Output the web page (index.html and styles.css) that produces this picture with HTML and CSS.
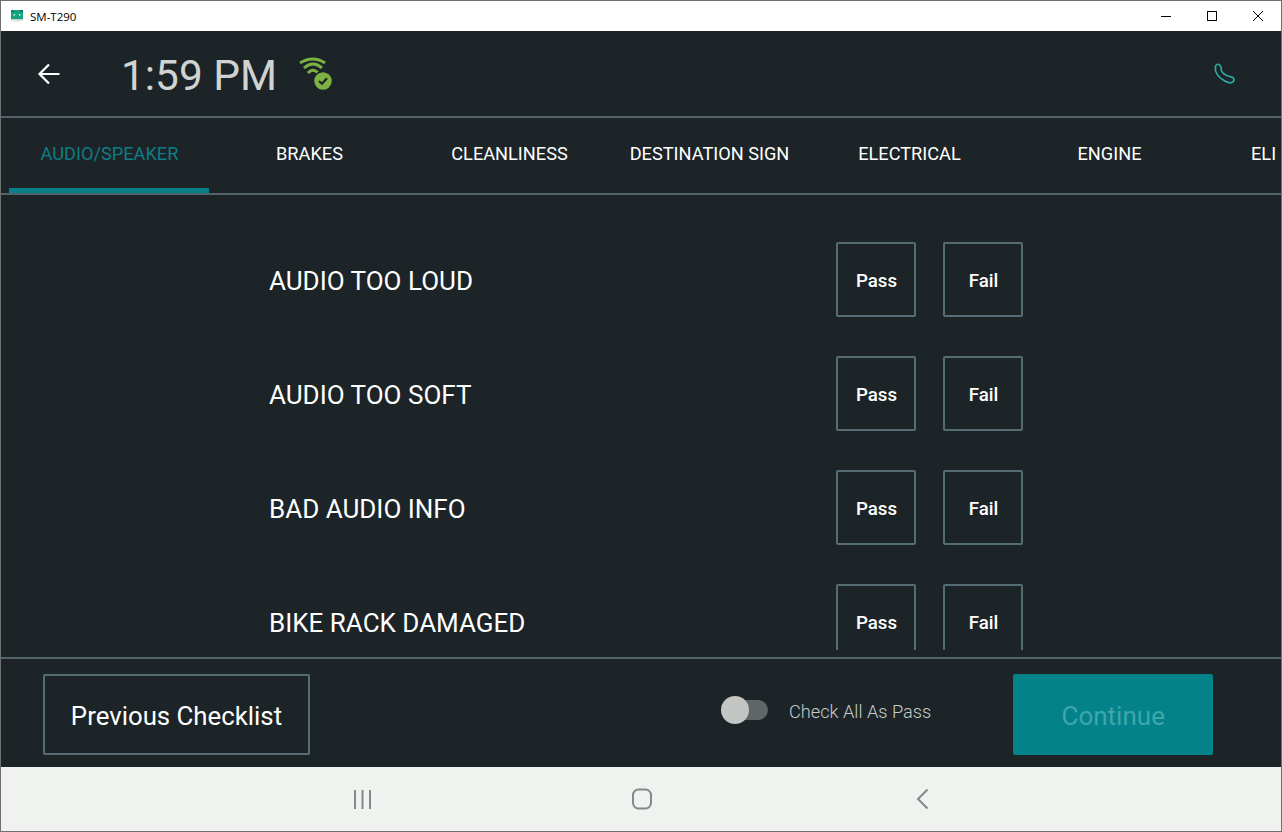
FILE: index.html
```html
<!DOCTYPE html>
<html>
<head>
    <meta charset="UTF-8">
    <title>SM-T290</title>
    <link rel="stylesheet" href="styles.css">
</head>
<body>
<div class="window">
    <div class="titlebar">
        <svg class="app-icon" width="14" height="14" viewBox="0 0 14 14">
            <path d="M1 1h12v9H1z" fill="#14a37f"/>
            <path d="M1 1h2.500L4 3H1zM13 1h-2.500L10 3h3z" fill="#0d7c62"/>
            <rect x="3.500" y="5" width="1.600" height="1.600" fill="#c9f2e4"/>
            <rect x="8.900" y="5" width="1.600" height="1.600" fill="#c9f2e4"/>
            <rect x="1" y="10" width="12" height="1.500" fill="#c8cfcd"/>
            <rect x="4" y="11.500" width="6" height="1.500" fill="#e3e6e5"/>
        </svg>
        <span class="title">SM-T290</span>
        <div class="win-controls">
            <svg width="12" height="12" viewBox="0 0 12 12"><path d="M1 6.500h10" stroke="#000" fill="none"/></svg>
            <svg width="12" height="12" viewBox="0 0 12 12"><rect x="1.500" y="1.500" width="9" height="9" stroke="#000" fill="none"/></svg>
            <svg width="12" height="12" viewBox="0 0 12 12"><path d="M1 1l10 10M11 1L1 11" stroke="#000" fill="none"/></svg>
        </div>
    </div>

    <div class="app">
        <header class="header">
            <svg class="back" width="26" height="26" viewBox="0 0 26 26"><path d="M23.500 13H3.500M13 3.500L3.500 13l9.500 9.500" stroke="#fff" stroke-width="2.200" fill="none"/></svg>
            <span class="clock">1:59 PM</span>
            <svg class="wifi" width="36" height="37" viewBox="0 0 36 37">
                <path d="M2 8Q15 0 27 8M6 13Q15 5 24 13M10 18Q15 12.500 20 18" stroke="#7cb342" stroke-width="3" fill="none"/>
                <circle cx="25" cy="26" r="9.500" fill="#7cb342" stroke="#1c2428" stroke-width="1.500"/>
                <path d="M21 26l3 2.800 5-5.600" stroke="#1c2428" stroke-width="2.200" fill="none"/>
            </svg>
            <svg class="phone" width="24" height="25" viewBox="0 0 24 25"><path d="M3.500 5.500C4 3.800 5.800 2.800 7 3.500c1.200.6 1.800 1.600 2 3l.3 2.500c.2 1.500 1 2.500 2.200 3.500 1.500 1.200 3 2 4.500 2.500l3 .8c1.800.4 3 1.500 3 3s-1.500 3-3.500 3c-2 0-4-.5-6.500-2.300C8.500 17.500 5 13.500 3.800 10.500c-.5-1.800-.6-3.500-.3-5z" stroke="#2ea8a0" stroke-width="1.700" fill="none"/></svg>
        </header>

        <nav class="tabs">
            <div class="tab active">AUDIO/SPEAKER</div>
            <div class="tab">BRAKES</div>
            <div class="tab">CLEANLINESS</div>
            <div class="tab">DESTINATION SIGN</div>
            <div class="tab">ELECTRICAL</div>
            <div class="tab">ENGINE</div>
            <div class="tab tab-last">ELI</div>
        </nav>

        <main class="list">
            <div class="row">
                <div class="label">AUDIO TOO LOUD</div>
                <div class="btn">Pass</div>
                <div class="btn">Fail</div>
            </div>
            <div class="row">
                <div class="label">AUDIO TOO SOFT</div>
                <div class="btn">Pass</div>
                <div class="btn">Fail</div>
            </div>
            <div class="row">
                <div class="label">BAD AUDIO INFO</div>
                <div class="btn">Pass</div>
                <div class="btn">Fail</div>
            </div>
            <div class="row">
                <div class="label">BIKE RACK DAMAGED</div>
                <div class="btn">Pass</div>
                <div class="btn">Fail</div>
            </div>
        </main>

        <footer class="footer">
            <div class="prev">Previous Checklist</div>
            <div class="toggle"><span class="knob"></span></div>
            <div class="toggle-label">Check All As Pass</div>
            <div class="continue">Continue</div>
        </footer>
    </div>

    <div class="navbar">
        <svg width="22" height="22" viewBox="0 0 22 22"><path d="M3 2v19M10.500 2v19M18 2v19" stroke="#868887" stroke-width="2" fill="none"/></svg>
        <svg width="22" height="22" viewBox="0 0 22 22"><rect x="1" y="1.500" width="18" height="19" rx="5.500" stroke="#868887" stroke-width="2" fill="none"/></svg>
        <svg width="22" height="22" viewBox="0 0 22 22"><path d="M15.500 1.500L6 11l9.500 9.500" stroke="#868887" stroke-width="2" fill="none"/></svg>
    </div>
</div>
</body>
</html>
```

FILE: styles.css
```css
html, body {
    margin: 0;
    padding: 0;
}
body {
    font-family: 'Roboto', sans-serif;
    overflow: hidden;
}
.window {
    width: 1282px;
    height: 832px;
    box-sizing: border-box;
    border: 1px solid #707070;
    display: flex;
    flex-direction: column;
    overflow: hidden;
}
.titlebar {
    height: 30px;
    background-color: #fff;
    display: flex;
    align-items: center;
    flex-shrink: 0;
}
.app-icon {
    margin-left: 9px;
}
.title {
    margin-left: 6px;
    font-family: 'Open Sans', sans-serif;
    font-size: 11.5px;
    color: #000;
}
.win-controls {
    margin-left: auto;
    margin-right: 17px;
    display: flex;
    gap: 34px;
}
.app {
    flex: 1;
    min-height: 0;
    background-color: #1c2428;
    display: flex;
    flex-direction: column;
}
.header {
    height: 85px;
    display: flex;
    align-items: center;
    border-bottom: 2px solid #52636b;
    flex-shrink: 0;
}
.back {
    margin-left: 35px;
}
.clock {
    width: 177px;
    margin-left: 59px;
    padding-top: 3px;
    font-size: 42.4px;
    font-weight: 400;
    color: #cfd4d3;
}
.phone {
    margin-left: auto;
    margin-right: 45px;
}
.tabs {
    height: 75px;
    padding-left: 8px;
    display: flex;
    border-bottom: 2px solid #52636b;
    overflow: hidden;
    flex-shrink: 0;
}
.tab {
    width: 200px;
    flex-shrink: 0;
    box-sizing: border-box;
    height: 75px;
    padding-left: 1px;
    line-height: 72px;
    text-align: center;
    font-size: 18.2px;
    color: #fff;
}
.tab.active {
    color: #0f7c85;
    border-bottom: 5px solid #07808a;
}
.tab-last {
    width: 72px;
    padding-left: 42px;
    text-align: left;
}
.list {
    height: 455px;
    padding: 47px 0 0 268px;
    box-sizing: border-box;
    overflow: hidden;
    flex-shrink: 0;
}
.row {
    display: flex;
    align-items: center;
    height: 75px;
    margin-bottom: 39px;
}
.label {
    width: 567px;
    padding-top: 2px;
    font-size: 26px;
    color: #fff;
}
.btn {
    width: 80px;
    height: 75px;
    box-sizing: border-box;
    margin-right: 27px;
    padding: 2px 0 0 1px;
    border: 2px solid #556c75;
    border-radius: 2px;
    display: flex;
    align-items: center;
    justify-content: center;
    font-size: 18.7px;
    font-weight: 500;
    color: #fff;
}
.footer {
    flex: 1;
    margin-top: 7px;
    padding-top: 2px;
    border-top: 2px solid #52636b;
    display: flex;
    align-items: center;
}
.prev {
    margin-left: 42px;
    width: 267px;
    height: 81px;
    box-sizing: border-box;
    padding-top: 3px;
    border: 2px solid #556c75;
    border-radius: 2px;
    display: flex;
    align-items: center;
    justify-content: center;
    font-size: 25.8px;
    color: #fff;
}
.toggle {
    position: relative;
    margin: 0 0 8px 417px;
    width: 41px;
    height: 20px;
    border-radius: 10px;
    background-color: #5f6668;
}
.knob {
    position: absolute;
    left: -6px;
    top: -4px;
    width: 28px;
    height: 28px;
    border-radius: 50%;
    background-color: #c4c6c3;
}
.toggle-label {
    margin: 0 0 6px 21px;
    font-size: 18.2px;
    font-weight: 300;
    color: #c5cbca;
}
.continue {
    margin-left: 82px;
    width: 200px;
    height: 81px;
    padding-top: 3px;
    box-sizing: border-box;
    border-radius: 2px;
    background-color: #03828a;
    display: flex;
    align-items: center;
    justify-content: center;
    font-size: 26px;
    color: #3fa6aa;
}
.navbar {
    height: 64px;
    padding-left: 3px;
    background-color: #f0f2ef;
    display: flex;
    align-items: center;
    justify-content: center;
    gap: 258px;
    flex-shrink: 0;
}
```
